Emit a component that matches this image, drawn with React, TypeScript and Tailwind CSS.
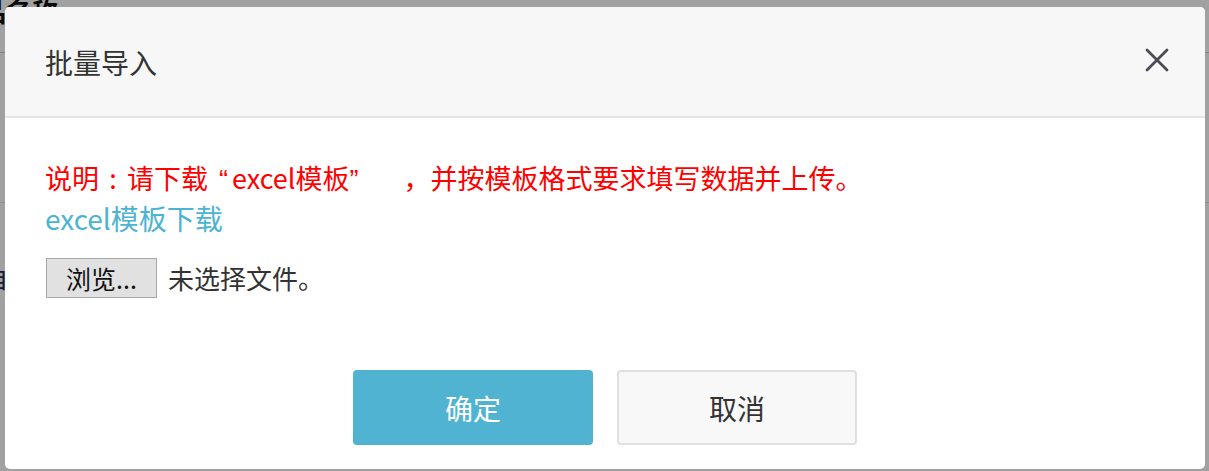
export default function App() {
  return (
    <div className="relative h-[471px] w-[1209px] overflow-hidden bg-white font-['Noto_Sans_CJK_SC','Noto_Sans',sans-serif]">
      {/* page underneath the dialog */}
      <div className="flex flex-col">
        <div className="-ml-[20px] -mt-[9px] h-[62px] border-b border-[#d0d0d0] text-[26px] font-bold leading-[40px] text-[#111]">
          品名称
        </div>
        <div className="h-[150px] border-b border-[#e0e0e0] pt-[50px] text-[24px] leading-[30px] text-[#1c2a5a]">
          <span className="-ml-[12px] inline-block">/</span>
        </div>
        <div className="pt-[60px] text-[24px] leading-[30px] text-[#1c2a5a]">
          <span className="-ml-[16px] inline-block">自</span>
        </div>
      </div>

      {/* overlay */}
      <div className="absolute inset-0 flex items-start bg-black/[0.37] pl-[5px] pt-[7px]">
        <div className="flex h-[462px] w-[1200px] flex-col overflow-hidden rounded-[5px] bg-white">
          <div className="flex h-[111px] shrink-0 items-center justify-between border-b-2 border-[#e5e5e5] bg-[#f7f7f7] pl-[40px] pr-[36px]">
            <span className="text-[28px] leading-none text-[#333]">批量导入</span>
            <svg width="24" height="24" viewBox="0 0 24 24" className="-mt-[4px]">
              <path d="M2 2L22 22M22 2L2 22" stroke="#4b4b55" strokeWidth="2.8" strokeLinecap="round" />
            </svg>
          </div>

          <div className="flex-1 px-[40px] pt-[41px]">
            <p className="whitespace-nowrap text-[27px] leading-[38px] text-[#ff0000]">
              说明<span className="inline-block w-[28px] text-center">:</span>请下载
              <span className="inline-block w-[24px] pl-[11px] font-['Liberation_Sans']">“</span>excel模板
              <span className="inline-block w-[54px] font-['Liberation_Sans']">”</span>，并按模板格式要求填写数据并上传。
            </p>
            <a className="block text-[28px] leading-[38px] text-[#4cb3d4]">excel模板下载</a>
            <div className="mt-[21px] flex items-center">
              <button className="ml-[1px] flex h-[40px] w-[111px] items-center justify-center border border-[#a8a8a8] bg-[#e1e1e1] text-[25px] leading-none text-[#111]">
                浏览...
              </button>
              <span className="ml-[11px] text-[26px] leading-none text-[#333]">未选择文件。</span>
            </div>
          </div>

          <div className="flex shrink-0 justify-center gap-[24px] pb-[24px]">
            <button className="h-[75px] w-[240px] rounded-[4px] bg-[#4fb3d1] text-[28px] text-white">
              确定
            </button>
            <button className="h-[75px] w-[240px] rounded-[4px] border-2 border-[#e0e0e0] bg-[#f8f8f8] text-[28px] text-[#333]">
              取消
            </button>
          </div>
        </div>
      </div>
    </div>
  );
}
